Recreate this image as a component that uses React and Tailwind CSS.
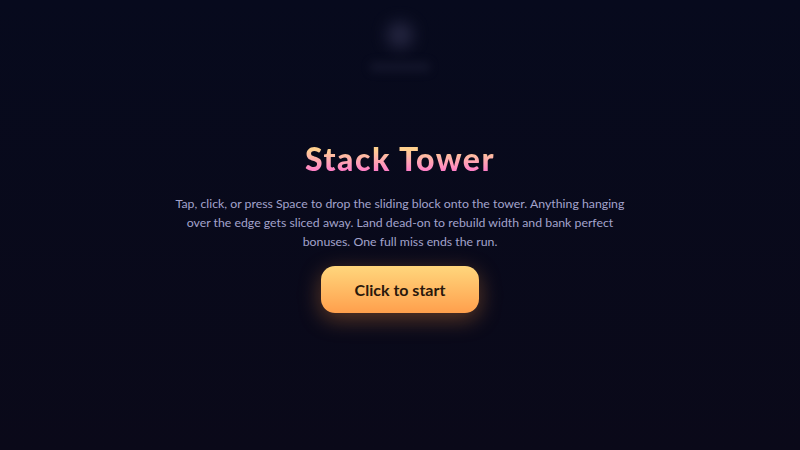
export default function App() {
  return (
    <div
      className="relative w-full h-[450px] overflow-hidden bg-gradient-to-b from-[#070a1d] to-[#0a0919] flex flex-col items-center"
      style={{ fontFamily: 'Lato, "Noto Sans", sans-serif' }}
    >
      {/* faint blurred tower preview */}
      <div className="absolute left-1/2 top-[22px] -translate-x-1/2 flex flex-col items-center gap-[14px] opacity-60">
        <div className="w-[26px] h-[26px] rounded-full bg-[#3a3a5a] blur-[8px]" />
        <div className="w-[60px] h-[10px] rounded bg-[#1a1c33] blur-[4px]" />
      </div>

      <div className="flex flex-col items-center mt-[140px]">
        <h1 className="text-[32px] leading-[38px] font-black tracking-[1.5px] bg-gradient-to-b from-[#ffd08e] from-25% to-[#ff80c6] to-80% bg-clip-text text-transparent">
          Stack Tower
        </h1>
        <p className="mt-[16px] w-[460px] text-center text-[12.3px] leading-[19px] text-[#a3a3cc]">
          Tap, click, or press Space to drop the sliding block onto the tower. Anything hanging
          over the edge gets sliced away. Land dead-on to rebuild width and bank perfect
          bonuses. One full miss ends the run.
        </p>
        <button className="mt-[15px] w-[158px] h-[47px] rounded-[14px] bg-gradient-to-b from-[#ffd67c] to-[#ff9f4c] text-[16px] font-bold text-[#2a180c] shadow-[0_6px_22px_rgba(255,150,60,0.35)]">
          Click to start
        </button>
      </div>
    </div>
  );
}
